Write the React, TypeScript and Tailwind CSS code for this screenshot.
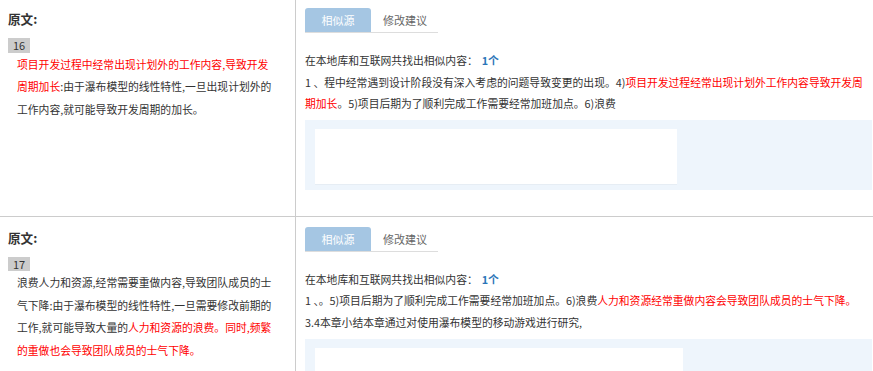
import React from "react";

const R = ({ children }: { children: React.ReactNode }) => (
  <span className="text-[#ff0000]">{children}</span>
);

function Tabs() {
  return (
    <div className="flex w-[133px] border-b border-[#dddddd] h-[25px] mt-[10px]">
      <div className="w-[66px] h-[24px] rounded-t-[3px] bg-[#a5c6e3] text-white flex items-center justify-center text-[11px]">
        相似源
      </div>
      <div className="ml-[12px] h-[24px] flex items-center text-[#666666] text-[11px]">
        修改建议
      </div>
    </div>
  );
}

function Row({
  num,
  left,
  right,
  innerW,
}: {
  num: string;
  left: React.ReactNode;
  right: React.ReactNode;
  innerW: string;
}) {
  return (
    <div className="flex border-b border-[#cccccc] text-[#333333]">
      <div className="w-[296px] shrink-0 border-r border-[#cccccc] pt-[12px]">
        <div className="pl-[8px] h-[18px] leading-[18px] text-[12.6px] font-bold text-[#333333]">
          原文:
        </div>
        <div className="pl-[8px] mt-[10px] flex">
          <span className="block h-[14.5px] leading-[14.5px] px-[5px] bg-[#cccccc] text-[11px] text-[#333333]">
            {num}
          </span>
        </div>
        <div className="pl-[17px] text-[10.8px] leading-[22.5px] whitespace-nowrap">
          {left}
        </div>
      </div>
      <div className="flex-1 min-w-0 pl-[9px] pr-[1px] pb-[26px]">
        <Tabs />
        <div className="mt-[17px] text-[10.8px] leading-[21.6px] whitespace-nowrap">
          {right}
        </div>
        <div className="mt-[5px] h-[70px] bg-[#eef5fc] pt-[9px] pl-[10px] pb-[5px]">
          <div className={`h-[56px] bg-white border-b border-[#e6edf4] ${innerW}`} />
        </div>
      </div>
    </div>
  );
}

export default function App() {
  const font = {
    fontFamily:
      '"Noto Sans CJK SC", "Microsoft YaHei", "Noto Sans", "Liberation Sans", sans-serif',
  };
  const head = (
    <div>
      在本地库和互联网共找出相似内容：
      <span className="ml-[4px] font-bold text-[#2a74b8]">1个</span>
    </div>
  );
  return (
    <div className="w-[873px] h-[371px] overflow-hidden bg-white" style={font}>
      <div className="-mt-[2px]">
        <Row
          num="16"
          innerW="w-[362px]"
          left={
            <>
              <div>
                <R>项目开发过程中经常出现计划外的工作内容,导致开发</R>
              </div>
              <div>
                <R>周期加长</R>:由于瀑布模型的线性特性,一旦出现计划外的
              </div>
              <div>工作内容,就可能导致开发周期的加长。</div>
            </>
          }
          right={
            <>
              {head}
              <div>
                1 、程中经常遇到设计阶段没有深入考虑的问题导致变更的出现。4)
                <R>项目开发过程经常出现计划外工作内容导致开发周</R>
              </div>
              <div>
                <R>期加长</R>。5)项目后期为了顺利完成工作需要经常加班加点。6)浪费
              </div>
            </>
          }
        />
        <Row
          num="17"
          innerW="w-[368px]"
          left={
            <>
              <div>浪费人力和资源,经常需要重做内容,导致团队成员的士</div>
              <div>气下降:由于瀑布模型的线性特性,一旦需要修改前期的</div>
              <div>
                工作,就可能导致大量的<R>人力和资源的浪费。同时,频繁</R>
              </div>
              <div>
                <R>的重做也会导致团队成员的士气下降。</R>
              </div>
            </>
          }
          right={
            <>
              {head}
              <div>
                1 、。5)项目后期为了顺利完成工作需要经常加班加点。6)浪费
                <R>人力和资源经常重做内容会导致团队成员的士气下降。</R>
              </div>
              <div>3.4本章小结本章通过对使用瀑布模型的移动游戏进行研究,</div>
            </>
          }
        />
      </div>
    </div>
  );
}
